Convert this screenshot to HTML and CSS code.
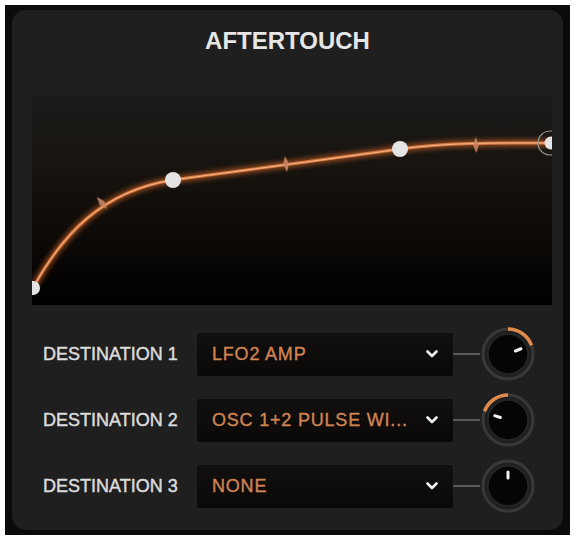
FILE: index.html
```html
<html>
<head>
    <title>Aftertouch</title>
<link rel="stylesheet" href="styles.css">
</head>
<body>

<div class="frame">
  <div class="panel">

    <h1 class="title">AFTERTOUCH</h1>

    <div class="curve">
      <svg width="520" height="210" viewBox="0 0 520 210">
        <defs>
          <filter id="glow" x="-10%" y="-50%" width="120%" height="200%">
            <feGaussianBlur stdDeviation="2.5"/>
          </filter>
        </defs>
        <!-- glow underneath, then the line itself -->
        <path class="curve-glow" filter="url(#glow)"
              d="M1,193 C30,140 70,96 141,85 C220,74 300,64 368,54 C420,47 470,48 520,48"/>
        <path class="curve-line"
              d="M1,193 C30,140 70,96 141,85 C220,74 300,64 368,54 C420,47 470,48 520,48"/>
        <path class="curve-core"
              d="M1,193 C30,140 70,96 141,85 C220,74 300,64 368,54 C420,47 470,48 520,48"/>

        <!-- tension handles -->
        <g class="handle">
          <path transform="translate(70,108) rotate(-40)" d="M0,-8 L3,0 L0,8 L-3,0 Z"/>
          <path transform="translate(254,69) rotate(-8)" d="M0,-8 L3,0 L0,8 L-3,0 Z"/>
          <path transform="translate(444,50) rotate(-2)" d="M0,-8 L3,0 L0,8 L-3,0 Z"/>
        </g>

        <!-- points -->
        <circle class="point" cx="1" cy="193" r="7"/>
        <circle class="point" cx="141" cy="85" r="8"/>
        <circle class="point" cx="368" cy="54" r="8"/>
        <circle class="point-ring" cx="518" cy="48" r="12"/>
        <circle class="point" cx="519" cy="48" r="6.5"/>
      </svg>
    </div>

    <div class="rows">

      <div class="row">
        <span class="label">DESTINATION 1</span>
        <div class="select">
          <span class="value">LFO2 AMP</span>
          <svg class="chevron" width="12" height="8" viewBox="0 0 12 8"><path d="M1.5,1.5 L6,6 L10.5,1.5"/></svg>
        </div>
        <span class="wire"></span>
        <svg class="knob" width="56" height="56" viewBox="0 0 56 56">
          <circle class="knob-track" cx="28" cy="28" r="25"/>
          <path class="knob-arc" d="M28,3 A25,25 0 0 1 51.49,19.45"/>
          <circle class="knob-body" cx="28" cy="28" r="20"/>
          <line class="knob-mark" x1="28" y1="20" x2="28" y2="14" transform="rotate(68 28 28)"/>
        </svg>
      </div>

      <div class="row">
        <span class="label">DESTINATION 2</span>
        <div class="select">
          <span class="value">OSC 1+2 PULSE WI...</span>
          <svg class="chevron" width="12" height="8" viewBox="0 0 12 8"><path d="M1.5,1.5 L6,6 L10.5,1.5"/></svg>
        </div>
        <span class="wire"></span>
        <svg class="knob" width="56" height="56" viewBox="0 0 56 56">
          <circle class="knob-track" cx="28" cy="28" r="25"/>
          <path class="knob-arc" d="M28,3 A25,25 0 0 0 4.51,19.45"/>
          <circle class="knob-body" cx="28" cy="28" r="20"/>
          <line class="knob-mark" x1="28" y1="20" x2="28" y2="14" transform="rotate(-72 28 28)"/>
        </svg>
      </div>

      <div class="row">
        <span class="label">DESTINATION 3</span>
        <div class="select">
          <span class="value">NONE</span>
          <svg class="chevron" width="12" height="8" viewBox="0 0 12 8"><path d="M1.5,1.5 L6,6 L10.5,1.5"/></svg>
        </div>
        <span class="wire"></span>
        <svg class="knob" width="56" height="56" viewBox="0 0 56 56">
          <circle class="knob-track" cx="28" cy="28" r="25"/>
          <circle class="knob-body" cx="28" cy="28" r="20"/>
          <line class="knob-mark" x1="28" y1="20" x2="28" y2="14"/>
        </svg>
      </div>

    </div>
  </div>
</div>

</body>
</html>
```

FILE: styles.css
```css
body {
    margin: 0;
    background-color: #ffffff;
    font-family: "Liberation Sans", Arial, sans-serif;
}

.frame {
    margin: 5px 8px 0 5px;
    width: 565px;
    height: 530px;
    box-sizing: border-box;
    padding: 5px 7px;
    background-color: #0b0b0b;
}

.panel {
    width: 551px;
    height: 520px;
    box-sizing: border-box;
    padding-top: 19px;
    border-radius: 14px;
    background-color: #1f1f1f;
}

.title {
    margin: 0;
    font-size: 24px;
    line-height: 24px;
    font-weight: bold;
    text-align: center;
    color: #e6e6e6;
}

.curve {
    margin: 42px 0 0 20px;
    width: 520px;
    height: 210px;
    background: linear-gradient(to bottom, #1c1b1a 0%, #17130f 35%, #0a0705 75%, #000000 100%);
}

.curve svg {
    display: block;
}

.curve-glow {
    fill: none;
    stroke: #d96a2a;
    stroke-width: 7;
    opacity: 0.6;
}

.curve-line {
    fill: none;
    stroke: #d97b40;
    stroke-width: 3;
}

.curve-core {
    fill: none;
    stroke: #f2b48a;
    stroke-width: 1;
}

.handle {
    fill: #c98563;
    opacity: 0.9;
}

.point {
    fill: #e4e4e4;
}

.point-ring {
    fill: none;
    stroke: #9a9690;
    stroke-width: 1.2;
}

.rows {
    margin-top: 16px;
}

.row {
    display: flex;
    align-items: center;
    height: 66px;
    padding-left: 31px;
}

.label {
    width: 154px;
    font-size: 18px;
    color: #dcdcdc;
    -webkit-text-stroke: 0.45px #dcdcdc;
}

.select {
    display: flex;
    align-items: center;
    justify-content: space-between;
    width: 256px;
    height: 43px;
    box-sizing: border-box;
    padding: 0 15px 0 15px;
    border-radius: 2px;
    background: linear-gradient(to bottom, #11100f, #0a0908);
}

.value {
    font-size: 18px;
    letter-spacing: 0.8px;
    color: #d28452;
    -webkit-text-stroke: 0.35px #d28452;
    white-space: nowrap;
}

.chevron path {
    fill: none;
    stroke: #f0f0f0;
    stroke-width: 2.6;
    stroke-linecap: round;
    stroke-linejoin: round;
}

.wire {
    width: 27px;
    height: 2px;
    background-color: #5a5a5a;
}

.knob {
    display: block;
}

.knob-track {
    fill: none;
    stroke: #383838;
    stroke-width: 3;
}

.knob-arc {
    fill: none;
    stroke: #e08a4c;
    stroke-width: 3.5;
}

.knob-body {
    fill: #050505;
    stroke: #262626;
    stroke-width: 1.5;
}

.knob-mark {
    stroke: #f2f2f2;
    stroke-width: 3;
    stroke-linecap: round;
}
```
